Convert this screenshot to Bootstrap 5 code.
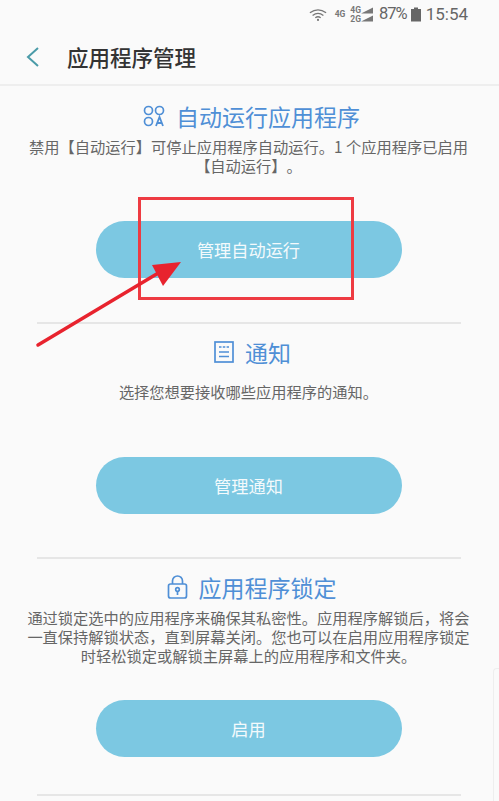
<!DOCTYPE html>
<html lang="zh">
<head>
<meta charset="utf-8">
<title>应用程序管理</title>
<link href="https://cdn.jsdelivr.net/npm/bootstrap@5.3.0/dist/css/bootstrap.min.css" rel="stylesheet">
<style>
html,body{height:801px;overflow:hidden}
body{background:#fafafa;font-family:"Noto Sans CJK SC","Liberation Sans",sans-serif;position:relative;width:499px;text-spacing-trim:space-all}
.status-row{height:29px;padding-right:31px;color:#666;font-family:Roboto,sans-serif;font-size:17px}
.tiny-net{font-size:8.5px;font-weight:700;line-height:9px;color:#777}
.net-a{margin-left:8px}
.net-b{margin-left:5px}
.pct-text{margin-left:6px;letter-spacing:-1px;font-size:16.5px}
.batt-ico{margin-left:4px}
.time-text{margin-left:5px}
.head-row{height:57px;border-bottom:2px solid #eeeeee;padding-left:26px}
.head-title{font-size:21.5px;font-weight:500;color:#333;margin-left:27px;line-height:1;margin-bottom:0}
.sect{padding-inline:26px 28px;text-align:center}
.sect-title{color:#4f8fd6;font-size:23px;font-weight:400;line-height:32px;margin:0;gap:11px;padding-left:6px}
.sect-desc{color:#666;font-size:15.25px;line-height:19px;margin:0}
.pill{display:block;width:306px;height:57px;line-height:53px;padding:0;border-radius:29px;border:0;background:#7cc8e2;color:#f4fafc;font-size:17.2px;margin-inline:auto}
.pill:hover{background:#7cc8e2;color:#f4fafc}
.rule{height:2px;background:#e6e6e6;margin-inline:37px 38px}
.s1{padding-top:14px;height:236px}
.s1 .sect-desc{margin-top:5px}
.s1 .pill{margin-top:46px}
.s2{padding-top:12px;height:233px}
.s2 .sect-title{padding-left:8px}
.s2 .sect-desc{margin-top:14px}
.s2 .pill{margin-top:56px}
.s3{padding-top:12px;height:235px}
.s3 .sect-desc{margin-top:5px}
.s3 .pill{margin-top:35px}
.mark-box{position:absolute;left:138px;top:197px;width:216px;height:103px;border:3px solid #ee3b42}
.mark-arrow{position:absolute;left:30px;top:255px}
.edge-shade{position:absolute;left:493px;top:668px;width:6px;height:133px;border-left:1px solid #eee;border-top:1px solid #eee;border-top-left-radius:4px}
</style>
</head>
<body>
<div class="status-row d-flex align-items-center justify-content-end">
  <svg width="18" height="16" viewBox="0 0 20 16" fill="none" stroke="#777" stroke-width="1.5"><path d="M1 5.500Q10-1 19 5.500M4 8.500Q10 4 16 8.500M7 11Q10 9 13 11"/><circle cx="10" cy="13.500" r="1.200" fill="#777" stroke="none"/></svg>
  <span class="tiny-net net-a">4G</span>
  <span class="tiny-net net-b d-flex flex-column"><span>4G</span><span>2G</span></span>
  <svg width="12" height="15" viewBox="0 0 12 15" fill="#777"><path d="M0 6.500l12-6v6zM0 14.500l12-6v6z"/></svg>
  <span class="pct-text">87%</span>
  <svg width="10" height="15" viewBox="0 0 10 14" fill="#666" class="batt-ico"><path d="M3 0h4v1.500h3V14H0V1.500h3z"/></svg>
  <span class="time-text">15:54</span>
</div>
<div class="head-row d-flex align-items-center">
  <svg width="14" height="22" viewBox="0 0 14 22" fill="none" stroke="#4a9ba8" stroke-width="2"><path d="M12 2 2 11l10 9"/></svg>
  <h1 class="head-title">应用程序管理</h1>
</div>
<section class="sect s1">
  <h2 class="sect-title d-flex justify-content-center align-items-center">
    <svg width="22" height="22" viewBox="0 0 22 22" fill="none" stroke="#4f8fd6" stroke-width="1.700"><circle cx="5.500" cy="5.500" r="4"/><circle cx="16.500" cy="5.500" r="4"/><circle cx="5.500" cy="16.500" r="4"/><path d="M13 21l3.500-9 3.500 9M14.200 18h4.600" stroke-width="1.800"/></svg>
    <span>自动运行应用程序</span>
  </h2>
  <p class="sect-desc">禁用【自动运行】可停止应用程序自动运行。1 个应用程序已启用【自动运行】。</p>
  <button type="button" class="btn pill">管理自动运行</button>
</section>
<div class="rule"></div>
<section class="sect s2">
  <h2 class="sect-title d-flex justify-content-center align-items-center">
    <svg width="20" height="22" viewBox="0 0 20 22" fill="none" stroke="#4f8fd6" stroke-width="1.700"><rect x="1" y="1" width="18" height="20"/><path d="M5 6h10" stroke-dasharray="2.500 1.300"/><path d="M5 11h10M5 15.500h10"/></svg>
    <span>通知</span>
  </h2>
  <p class="sect-desc">选择您想要接收哪些应用程序的通知。</p>
  <button type="button" class="btn pill">管理通知</button>
</section>
<div class="rule"></div>
<section class="sect s3">
  <h2 class="sect-title d-flex justify-content-center align-items-center">
    <svg width="21" height="24" viewBox="0 0 20 24" fill="none" stroke="#4f8fd6" stroke-width="1.700"><rect x="1" y="9" width="18" height="14" rx="2"/><path d="M5 9V6a5 5 0 0 1 10 0v3"/><circle cx="10" cy="14.500" r="1.800"/><path d="M10 16.300V20"/></svg>
    <span>应用程序锁定</span>
  </h2>
  <p class="sect-desc">通过锁定选中的应用程序来确保其私密性。应用程序解锁后，将会一直保持解锁状态，直到屏幕关闭。您也可以在启用应用程序锁定时轻松锁定或解锁主屏幕上的应用程序和文件夹。</p>
  <button type="button" class="btn pill">启用</button>
</section>
<div class="rule"></div>
<div class="mark-box"></div>
<svg class="mark-arrow" width="160" height="100" viewBox="0 0 160 100"><path d="M8 90 130 17" stroke="#e8232e" stroke-width="3.500" stroke-linecap="round"/><path d="M151 7 122 10 133 31z" fill="#e8232e"/></svg>
<div class="edge-shade"></div>
</body>
</html>
